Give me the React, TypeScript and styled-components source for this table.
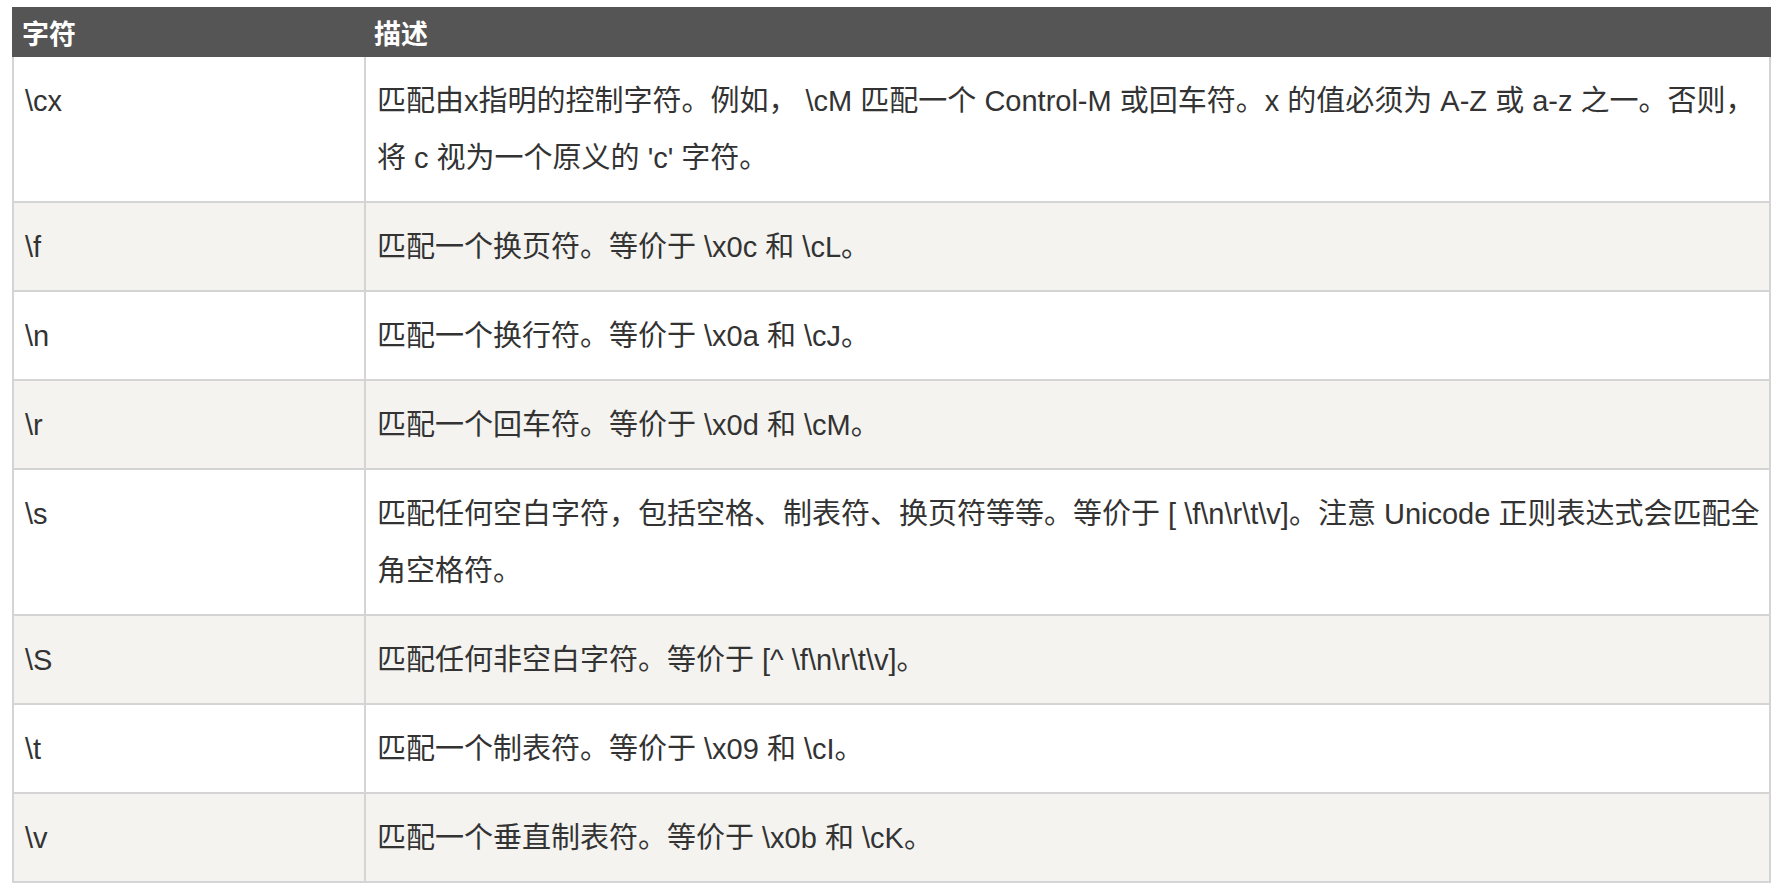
import styled, { createGlobalStyle } from 'styled-components';

const GlobalStyle = createGlobalStyle`
  html, body {
    margin: 0;
    padding: 0;
    background: #fff;
  }
  body {
    font-family: "Liberation Sans", "Noto Sans CJK SC", Arial, sans-serif;
    color: #333;
  }
`;

const Page = styled.div`
  padding: 7px 8px 0 12px;
`;

const Table = styled.table`
  width: 1759px;
  border-collapse: collapse;
  table-layout: fixed;
`;

const HeadCell = styled.th`
  height: 48px;
  padding: 0 8px;
  box-sizing: border-box;
  background-color: #555;
  border: 2px solid #555;
  color: #fff;
  font-size: 27px;
  font-weight: 700;
  text-align: left;
  vertical-align: middle;
`;

const Row = styled.tr<{ $striped: boolean }>`
  background-color: ${({ $striped }) => ($striped ? '#f4f3f0' : '#fff')};
`;

const Cell = styled.td`
  padding: 16px 6px 14px 11px;
  border: 2px solid #d4d4d4;
  font-size: 29px;
  line-height: 57px;
  vertical-align: top;
`;

interface CharItem {
  char: string;
  desc: string;
}

const CHARS: CharItem[] = [
  {
    char: '\\cx',
    desc: "匹配由x指明的控制字符。例如， \\cM 匹配一个 Control-M 或回车符。x 的值必须为 A-Z 或 a-z 之一。否则，将 c 视为一个原义的 'c' 字符。",
  },
  { char: '\\f', desc: '匹配一个换页符。等价于 \\x0c 和 \\cL。' },
  { char: '\\n', desc: '匹配一个换行符。等价于 \\x0a 和 \\cJ。' },
  { char: '\\r', desc: '匹配一个回车符。等价于 \\x0d 和 \\cM。' },
  {
    char: '\\s',
    desc: '匹配任何空白字符，包括空格、制表符、换页符等等。等价于 [ \\f\\n\\r\\t\\v]。注意 Unicode 正则表达式会匹配全角空格符。',
  },
  { char: '\\S', desc: '匹配任何非空白字符。等价于 [^ \\f\\n\\r\\t\\v]。' },
  { char: '\\t', desc: '匹配一个制表符。等价于 \\x09 和 \\cI。' },
  { char: '\\v', desc: '匹配一个垂直制表符。等价于 \\x0b 和 \\cK。' },
];

export default function App() {
  return (
    <Page>
      <GlobalStyle />
      <Table>
        <colgroup>
          <col style={{ width: 352 }} />
          <col />
        </colgroup>
        <thead>
          <tr>
            <HeadCell>字符</HeadCell>
            <HeadCell>描述</HeadCell>
          </tr>
        </thead>
        <tbody>
          {CHARS.map((item, i) => (
            <Row key={item.char} $striped={i % 2 === 1}>
              <Cell>{item.char}</Cell>
              <Cell>{item.desc}</Cell>
            </Row>
          ))}
        </tbody>
      </Table>
    </Page>
  );
}
